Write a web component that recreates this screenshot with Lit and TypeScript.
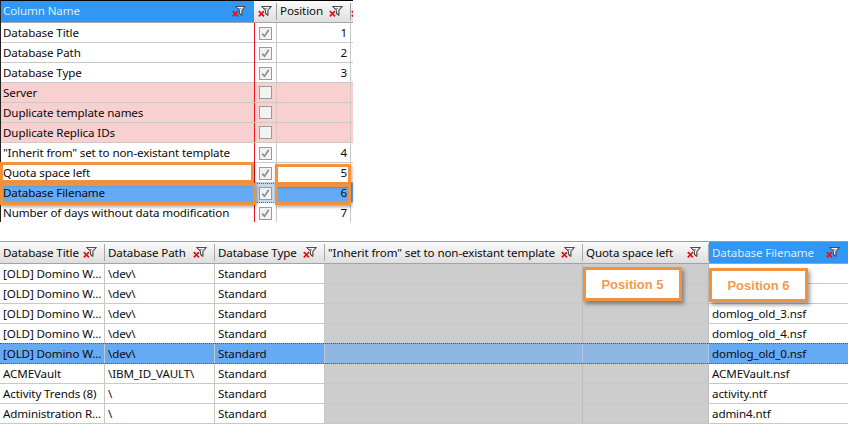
import { LitElement, html, css, svg } from "lit";
import { customElement } from "lit/decorators.js";

const filterIcon = () => html`<svg class="fi" width="14" height="11" viewBox="0 0 14 11">
  ${svg`<path d="M3.5 0.5 H13.5 L10 4.5 V9.5 L7.5 8 V4.5 Z" fill="#8f8f8f" stroke="#4d4d4d" stroke-width="1"/>
  <path d="M5.5 1.5 H10.5 L8.6 4 V7" fill="none" stroke="#f6f6f6" stroke-width="1.1"/>
  <path d="M0.8 5.2 L6 10.4 M6 5.2 L0.8 10.4" stroke="#e6101c" stroke-width="1.7"/>`}
</svg>`;

const checkbox = (on: boolean) => html`<span class="cb">${on
  ? html`<svg width="11" height="11" viewBox="0 0 11 11">${svg`<path d="M2.2 5.6 L4.5 8.2 L8.8 1.8" fill="none" stroke="#8a8a8a" stroke-width="1.6"/>`}</svg>`
  : ""}</span>`;

type TopRow = [string, boolean, string, string];
const topRows: TopRow[] = [
  ["Database Title", true, "1", ""],
  ["Database Path", true, "2", ""],
  ["Database Type", true, "3", ""],
  ["Server", false, "", "pink"],
  ["Duplicate template names", false, "", "pink"],
  ["Duplicate Replica IDs", false, "", "pink"],
  ['"Inherit from" set to non-existant template', true, "4", ""],
  ["Quota space left", true, "5", ""],
  ["Database Filename", true, "6", "sel"],
  ["Number of days without data modification", true, "7", ""],
];

type BottomRow = [string, string, string, string, string];
const old = "[OLD] Domino W...";
const bottomRows: BottomRow[] = [
  [old, "\\dev\\", "Standard", "", ""],
  [old, "\\dev\\", "Standard", "", ""],
  [old, "\\dev\\", "Standard", "domlog_old_3.nsf", ""],
  [old, "\\dev\\", "Standard", "domlog_old_4.nsf", ""],
  [old, "\\dev\\", "Standard", "domlog_old_0.nsf", "sel"],
  ["ACMEVault", "\\IBM_ID_VAULT\\", "Standard", "ACMEVault.nsf", ""],
  ["Activity Trends (8)", "\\", "Standard", "activity.ntf", ""],
  ["Administration R...", "\\", "Standard", "admin4.ntf", ""],
];

@customElement("app-root")
export class AppRoot extends LitElement {
  static styles = css`
    :host {
      display: block;
      position: relative;
      width: 848px;
      height: 426px;
      overflow: hidden;
      background: #fff;
      font-family: "Noto Sans", "DejaVu Sans", sans-serif;
      font-size: 11.6px;
      letter-spacing: -0.12px;
      color: #0c0c0c;
    }
    .top {
      width: 352px;
      height: 221px;
      border-top: 1px solid #000;
      border-left: 1px solid #222;
      margin-bottom: 19px;
      overflow: hidden;
    }
    .t-row {
      display: grid;
      grid-template-columns: 253px 1px 21px 1px 73px 1px 1fr;
      height: 19px;
      border-bottom: 1px solid #c8c8c8;
      line-height: 20px;
    }
    .t-head {
      height: 21px;
      line-height: 19px;
      border-bottom: 1px solid #a6a6a6;
      background: linear-gradient(#fbfbfb, #dedede);
    }
    .t-head span { margin-bottom: 2px; }
    .name { padding-left: 2px; white-space: nowrap; overflow: hidden; }
    .t-head .name {
      background: #3197f5;
      color: #dcecfb;
      display: flex;
      justify-content: space-between;
      align-items: center;
      padding-right: 8px;
    }
    .red { background: #e8141c; }
    .t-head .red { background: transparent; }
    .sep { background: #c8c8c8; }
    .t-head .sep { background: #a0a0a0; margin: 2px 0; }
    .chk { display: flex; align-items: center; justify-content: center; }
    .t-head .chk { justify-content: flex-start; padding-left: 3px; }
    .pos { text-align: right; padding-right: 3px; }
    .t-head .pos {
      text-align: left;
      padding: 0 7px 0 3px;
      display: flex;
      justify-content: space-between;
      align-items: center;
    }
    .clip { overflow: hidden; display: flex; align-items: center; }
    .fi { display: block; flex: none; }
    .pink { background: #f8d0d0; border-bottom-color: #d2c6c6; }
    .pink .sep { background: #d8c8c8; }
    .sel { background: #64aaf5; }
    .sel .chk { background: #c4d8ee; outline: 1px dotted #2f6f8a; outline-offset: -1px; }
    .cb {
      box-sizing: border-box;
      width: 13px;
      height: 13px;
      border: 1px solid #9a9a9a;
      background: #f2f2f2;
      display: flex;
      align-items: center;
      justify-content: center;
    }
    .bottom { border-top: 1px solid #9a9fa5; }
    .b-row {
      display: grid;
      grid-template-columns: 105px 110px 110px 258px 126px 1fr;
      height: 20px;
      line-height: 20px;
      box-sizing: border-box;
      border-bottom: 1px solid #c8c8c8;
    }
    .b-head {
      height: 22px;
      line-height: 18px;
      background: linear-gradient(#fbfbfb, #dedede);
      border-bottom: 1px solid #a0a4a8;
    }
    .b-cell {
      padding-left: 3px;
      white-space: nowrap;
      overflow: hidden;
      border-right: 1px solid #c8c8c8;
      box-sizing: border-box;
    }
    .b-cell:last-child { border-right: 0; }
    .b-head .b-cell {
      display: flex;
      align-items: center;
      justify-content: space-between;
      padding-right: 7px;
      border-right: 1px solid #a8a8a8;
      margin: 2px 0;
    }
    .b-head .active {
      background: #3197f5;
      color: #dcecfb;
      margin: 0;
      border-right: 0;
      padding-right: 8px;
    }
    .gray { background: #cdcdcd; border-right-color: #bdbdbd; }
    .b-row.r-sel {
      background: #64aaf5;
      border-top: 1px dotted #2f6f6a;
      border-bottom: 1px dotted #2f6f6a;
      margin-top: -1px;
      height: 21px;
      line-height: 19px;
    }
    .r-sel .gray { background: #8fb7e4; border-right-color: #b4c6dc; }
    .box {
      position: absolute;
      box-sizing: border-box;
      border: 3px solid #f0923e;
      box-shadow: 1px 2px 3px rgba(0, 0, 0, 0.35);
    }
    .call {
      position: absolute;
      box-sizing: border-box;
      width: 99px;
      height: 34px;
      background: #fff;
      border: 3px solid #f0923e;
      box-shadow: 2px 3px 4px rgba(0, 0, 0, 0.4);
      color: #f39a4c;
      font-family: "Liberation Sans", Arial, sans-serif;
      font-weight: 700;
      font-size: 13px;
      letter-spacing: 0;
      display: flex;
      align-items: center;
      justify-content: center;
    }
  `;

  render() {
    return html`
      <div class="top">
        <div class="t-row t-head">
          <div class="name"><span>Column Name</span>${filterIcon()}</div>
          <div class="red"></div>
          <div class="chk">${filterIcon()}</div>
          <div class="sep"></div>
          <div class="pos"><span>Position</span>${filterIcon()}</div>
          <div class="sep"></div>
          <div class="clip">${filterIcon()}</div>
        </div>
        ${topRows.map(
          ([n, on, p, c]) => html`<div class="t-row ${c}">
            <div class="name">${n}</div>
            <div class="red"></div>
            <div class="chk">${checkbox(on)}</div>
            <div class="sep"></div>
            <div class="pos">${p}</div>
            <div class="sep"></div>
            <div></div>
          </div>`
        )}
      </div>
      <div class="bottom">
        <div class="b-row b-head">
          ${["Database Title", "Database Path", "Database Type", '"Inherit from" set to non-existant template', "Quota space left"].map(
            (h) => html`<div class="b-cell"><span>${h}</span>${filterIcon()}</div>`
          )}
          <div class="b-cell active"><span>Database Filename</span>${filterIcon()}</div>
        </div>
        ${bottomRows.map(
          ([a, b, c, f, k]) => html`<div class="b-row ${k === "sel" ? "r-sel" : ""}">
            <div class="b-cell">${a}</div>
            <div class="b-cell">${b}</div>
            <div class="b-cell">${c}</div>
            <div class="b-cell gray"></div>
            <div class="b-cell gray"></div>
            <div class="b-cell">${f}</div>
          </div>`
        )}
      </div>
      <div class="box" style="left:0;top:162px;width:254px;height:21px"></div>
      <div class="box" style="left:275px;top:164px;width:76px;height:21px"></div>
      <div class="box" style="left:0;top:183px;width:256px;height:22px"></div>
      <div class="box" style="left:275px;top:184px;width:76px;height:21px"></div>
      <div class="call" style="left:583px;top:267px">Position 5</div>
      <div class="call" style="left:709px;top:268px">Position 6</div>
    `;
  }
}
